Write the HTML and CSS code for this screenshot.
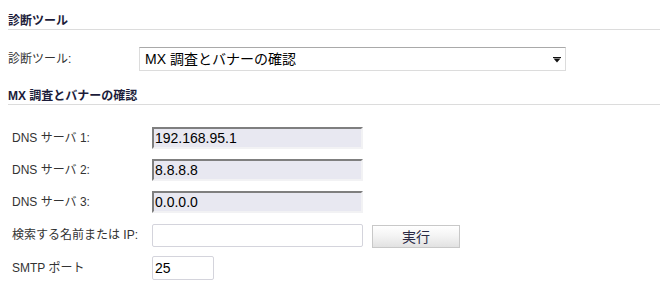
FILE: index.html
```html
<!DOCTYPE html>
<html lang="ja">
<head>
<meta charset="utf-8">
<title>診断ツール</title>
<link rel="stylesheet" href="styles.css">
</head>
<body>
<div class="page">
  <div class="section-head first">診断ツール</div>
  <div class="tool-row">
    <label class="tool-label">診断ツール:</label>
    <div class="select">
      <span class="select-text">MX 調査とバナーの確認</span>
      <svg class="arrow" width="8" height="6" viewBox="0 0 8 6"><rect x="0" y="0" width="8" height="1" fill="#111"/><polygon points="0.5,1.5 7.5,1.5 4,5.5" fill="#111"/></svg>
    </div>
  </div>
  <div class="section-head second">MX 調査とバナーの確認</div>
  <div class="form">
    <div class="row">
      <span class="label">DNS サーバ 1:</span>
      <div class="ro-input">192.168.95.1</div>
    </div>
    <div class="row">
      <span class="label">DNS サーバ 2:</span>
      <div class="ro-input">8.8.8.8</div>
    </div>
    <div class="row">
      <span class="label">DNS サーバ 3:</span>
      <div class="ro-input">0.0.0.0</div>
    </div>
    <div class="row row-search">
      <span class="label">検索する名前または IP:</span>
      <div class="text-input wide"></div>
      <button class="btn">実行</button>
    </div>
    <div class="row row-port">
      <span class="label">SMTP ポート</span>
      <div class="text-input short">25</div>
    </div>
  </div>
</div>
</body>
</html>
```

FILE: styles.css
```css
html, body {
  margin: 0;
  padding: 0;
  background: #ffffff;
}
body {
  font-family: "Liberation Sans", "Noto Sans CJK JP", sans-serif;
  font-size: 12px;
  color: #333333;
}
.page {
  width: 660px;
  height: 297px;
  overflow: hidden;
}
.section-head {
  margin-left: 8px;
  font-weight: bold;
  font-size: 12px;
  line-height: 16px;
  height: 16px;
  color: #1c1c3a;
  border-bottom: 1px solid #dcdcdc;
}
.section-head.first {
  margin-top: 13px;
}
.section-head.second {
  margin-top: 17px;
}
.tool-row {
  display: flex;
  align-items: center;
  margin-top: 17px;
  margin-left: 8px;
  height: 24px;
}
.tool-label {
  width: 131px;
  line-height: 16px;
}
.select {
  box-sizing: border-box;
  width: 427px;
  height: 24px;
  border: 1px solid #dcdcdc;
  border-top-color: #a9a9a9;
  display: flex;
  align-items: center;
  justify-content: space-between;
  padding: 0 4px 0 5px;
  font-size: 14px;
  color: #000000;
}
.select-text {
  line-height: 18px;
}
.arrow {
  display: block;
  margin-top: 1px;
}
.form {
  margin-top: 22px;
  padding-left: 12px;
}
.row {
  display: flex;
  align-items: center;
  height: 22px;
  margin-bottom: 10px;
}
.label {
  width: 140px;
  line-height: 16px;
  flex: none;
}
.ro-input {
  box-sizing: border-box;
  width: 211px;
  height: 22px;
  background: #e8e8f1;
  border-top: 2px solid #7f7f7f;
  border-left: 2px solid #7f7f7f;
  border-right: 2px solid #f2f2f4;
  border-bottom: 2px solid #f2f2f4;
  padding-left: 1px;
  font-size: 14px;
  line-height: 18px;
  color: #000000;
}
.row-search {
  height: 24px;
  margin-bottom: 9px;
}
.row-port {
  height: 24px;
}
.text-input {
  box-sizing: border-box;
  height: 23px;
  border: 1px solid #d4d4dc;
  border-radius: 2px;
  background: #ffffff;
  padding-left: 2px;
  font-size: 14px;
  line-height: 21px;
  color: #000000;
}
.text-input.wide {
  width: 211px;
}
.text-input.short {
  width: 62px;
  height: 24px;
  line-height: 22px;
}
.btn {
  box-sizing: border-box;
  margin-left: 9px;
  margin-top: 3px;
  width: 88px;
  height: 23px;
  border: 1px solid #c8c8c8;
  border-radius: 0;
  background: linear-gradient(#ffffff, #f4f4f4 45%, #e2e2e2);
  font-family: "Liberation Sans", "Noto Sans CJK JP", sans-serif;
  font-size: 14px;
  line-height: 20px;
  color: #2a2a44;
  padding: 0;
}
```
